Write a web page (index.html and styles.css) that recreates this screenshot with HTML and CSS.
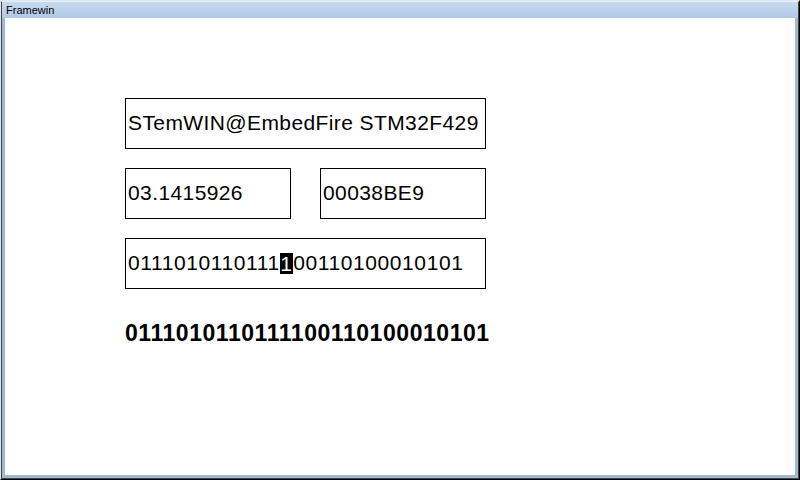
FILE: index.html
```html
<!DOCTYPE html>
<html>
<head>
<meta charset="utf-8">
<link rel="stylesheet" href="styles.css">
</head>
<body>
<div class="win">
  <div class="mid">
    <div class="frame">
      <div class="title">Framewin</div>
      <div class="client">
        <div class="box wide">STemWIN@EmbedFire STM32F429</div>
        <div class="row">
          <div class="box half">03.1415926</div>
          <div class="box half">00038BE9</div>
        </div>
        <div class="box wide digits">0111010110111<span class="cursor">1</span>00110100010101</div>
        <div class="bold">0111010110111100110100010101</div>
      </div>
    </div>
  </div>
</div>
</body>
</html>
```

FILE: styles.css
```css
html, body {
  margin: 0;
  padding: 0;
  background: #ffffff;
}
.win {
  width: 800px;
  height: 480px;
  box-sizing: border-box;
  border-style: solid;
  border-width: 1px;
  border-color: #dfe8f2 #000000 #000000 #dfe8f2;
}
.mid {
  height: 100%;
  box-sizing: border-box;
  border-style: solid;
  border-width: 1px;
  border-color: #e8eff7 #444444 #444444 #444444;
}
.frame {
  height: 100%;
  box-sizing: border-box;
  background: #9fb9d3;
  padding: 0 3px 3px 3px;
  display: flex;
  flex-direction: column;
}
.title {
  height: 16px;
  flex: none;
  margin: 0 -3px;
  padding-left: 4px;
  background: linear-gradient(#c6daef, #aec8e5);
  font-family: "Liberation Sans", Arial, sans-serif;
  font-size: 11px;
  line-height: 16px;
  color: #000;
}
.client {
  flex: 1;
  background: #ffffff;
  padding: 80px 0 0 120px;
  display: flex;
  flex-direction: column;
  gap: 19px;
}
.row {
  display: flex;
  gap: 29px;
}
.box {
  box-sizing: border-box;
  height: 51px;
  border: 1px solid #000;
  padding-left: 2px;
  padding-bottom: 1px;
  display: flex;
  align-items: center;
  font-family: "Liberation Sans", Arial, sans-serif;
  font-size: 21px;
  letter-spacing: 0.4px;
  color: #000;
  white-space: nowrap;
}
.digits {
  letter-spacing: 0.6px;
}
.wide {
  width: 361px;
}
.half {
  width: 166px;
}
.cursor {
  background: #000;
  color: #fff;
  line-height: 21px;
  padding: 0 0.5px;
}
.bold {
  margin-top: 12px;
  font-family: "Liberation Sans", Arial, sans-serif;
  font-weight: bold;
  font-size: 23px;
  letter-spacing: 0.55px;
  line-height: 26px;
  color: #000;
  white-space: nowrap;
}
```
